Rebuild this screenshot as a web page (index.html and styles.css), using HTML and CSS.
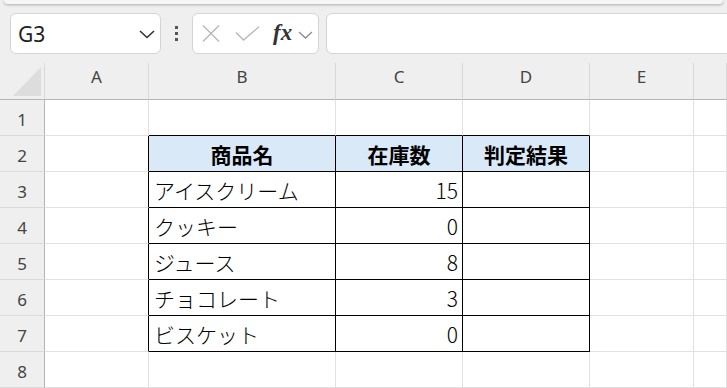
FILE: index.html
```html
<!DOCTYPE html>
<html lang="ja">
<head>
<meta charset="utf-8">
<link rel="stylesheet" href="styles.css">
</head>
<body>
<div class="app">
  <div class="ribbon-edge"></div>
  <div class="formula-bar">
    <div class="namebox">
      <span class="cellref">G3</span>
      <svg class="chev" width="16" height="9" viewBox="0 0 16 9"><path d="M1 1 L8 7.5 L15 1" fill="none" stroke="#333" stroke-width="1.6"/></svg>
    </div>
    <div class="dots"><i></i><i></i><i></i></div>
    <div class="fxbox">
      <svg class="ic-x" width="18" height="17" viewBox="0 0 18 17"><path d="M1 0.5 L17 16.5 M17 0.5 L1 16.5" stroke="#b8b8b8" stroke-width="1.4" fill="none"/></svg>
      <svg class="ic-check" width="25" height="15" viewBox="0 0 25 15"><path d="M1 6.5 L8.5 14 L24 0.8" stroke="#b8b8b8" stroke-width="1.4" fill="none"/></svg>
      <span class="fx">fx</span>
      <svg class="chev-s" width="15" height="8" viewBox="0 0 15 8"><path d="M1 1 L7.5 7 L14 1" fill="none" stroke="#8a8a8a" stroke-width="1.3"/></svg>
    </div>
    <div class="formula-input"></div>
  </div>
  <div class="sheet">
    <div class="corner"><svg width="44" height="36" viewBox="0 0 44 36"><polygon points="13,33 41,4 41,33" fill="#dddddd"/></svg></div>
    <div class="ch">A</div><div class="ch">B</div><div class="ch">C</div><div class="ch">D</div><div class="ch">E</div><div class="ch"></div>

    <div class="rh">1</div><div class="c"></div><div class="c bb"></div><div class="c bb"></div><div class="c bb"></div><div class="c"></div><div class="c"></div>

    <div class="rh">2</div><div class="c br"></div><div class="c t th">商品名</div><div class="c t th">在庫数</div><div class="c t th">判定結果</div><div class="c"></div><div class="c"></div>

    <div class="rh">3</div><div class="c br"></div><div class="c t">アイスクリーム</div><div class="c t num">15</div><div class="c t"></div><div class="c"></div><div class="c"></div>

    <div class="rh">4</div><div class="c br"></div><div class="c t">クッキー</div><div class="c t num">0</div><div class="c t"></div><div class="c"></div><div class="c"></div>

    <div class="rh">5</div><div class="c br"></div><div class="c t">ジュース</div><div class="c t num">8</div><div class="c t"></div><div class="c"></div><div class="c"></div>

    <div class="rh">6</div><div class="c br"></div><div class="c t">チョコレート</div><div class="c t num">3</div><div class="c t"></div><div class="c"></div><div class="c"></div>

    <div class="rh">7</div><div class="c br"></div><div class="c t">ビスケット</div><div class="c t num">0</div><div class="c t"></div><div class="c"></div><div class="c"></div>

    <div class="rh">8</div><div class="c"></div><div class="c"></div><div class="c"></div><div class="c"></div><div class="c"></div><div class="c"></div>
  </div>
</div>
</body>
</html>
```

FILE: styles.css
```css
* { box-sizing: border-box; }
html, body {
  margin: 0;
  padding: 0;
  width: 727px;
  height: 388px;
  overflow: hidden;
  background: #efefef;
}
.app {
  display: flex;
  flex-direction: column;
  height: 388px;
}
.ribbon-edge {
  height: 4px;
  margin: 0 4px;
  background: #f6f6f6;
  border-radius: 0 0 6px 6px;
  box-shadow: 0 1px 3px rgba(0, 0, 0, 0.28);
}
.formula-bar {
  display: flex;
  align-items: center;
  height: 59px;
  padding: 9px 0 9px 10px;
}
.namebox {
  width: 151px;
  height: 41px;
  background: #fff;
  border: 1px solid #d4d4d4;
  border-radius: 6px;
  display: flex;
  align-items: center;
  justify-content: space-between;
  padding: 0 5px 0 7px;
}
.cellref {
  font-family: "Noto Sans", sans-serif;
  font-size: 21px;
  color: #222;
  line-height: 1;
  padding-top: 1px;
}
.chev { margin-top: 1px; }
.dots {
  width: 31px;
  display: flex;
  flex-direction: column;
  align-items: center;
  gap: 3px;
}
.dots i {
  display: block;
  width: 3px;
  height: 3px;
  background: #555;
}
.fxbox {
  width: 127px;
  height: 41px;
  background: #fff;
  border: 1px solid #d4d4d4;
  border-radius: 6px;
  display: flex;
  align-items: center;
  padding-left: 8px;
}
.ic-x { margin-left: 1px; }
.ic-check { margin-left: 15px; }
.fx {
  margin-left: 13px;
  font-family: "Liberation Serif", serif;
  font-style: italic;
  font-weight: bold;
  font-size: 23px;
  color: #333;
  line-height: 1;
  margin-bottom: 3px;
}
.chev-s { margin-left: 6px; margin-top: 2px; }
.formula-input {
  flex: 1;
  height: 41px;
  margin-left: 7px;
  margin-right: -10px;
  background: #fff;
  border: 1px solid #d4d4d4;
  border-radius: 6px 0 0 6px;
}
.sheet {
  display: grid;
  grid-template-columns: 45px 104px 187px 127px 127px 104px 1fr;
  grid-template-rows: 37px repeat(8, 36px);
  background: #fff;
}
.corner {
  background: #efefef;
  border-right: 1px solid #d8d8d8;
  border-bottom: 1px solid #b5b5b5;
}
.corner svg { display: block; }
.ch {
  background: #efefef;
  border-right: 1px solid #d8d8d8;
  border-bottom: 1px solid #b5b5b5;
  font-family: "Noto Sans", sans-serif;
  font-size: 17px;
  color: #444;
  display: flex;
  align-items: center;
  justify-content: center;
  padding-bottom: 9px;
}
.rh {
  background: #efefef;
  border-right: 1px solid #b5b5b5;
  border-bottom: 1px solid #dadada;
  font-family: "Noto Sans", sans-serif;
  font-size: 17px;
  color: #444;
  display: flex;
  align-items: center;
  justify-content: center;
  padding-top: 3px;
}
.c {
  border-right: 1px solid #e1e1e1;
  border-bottom: 1px solid #e1e1e1;
  font-family: "Noto Sans CJK JP", sans-serif;
  font-weight: 300;
  font-size: 21px;
  color: #000;
  display: flex;
  align-items: center;
  padding: 0 4px 0 5px;
  white-space: nowrap;
}
.c.bb { border-bottom-color: #000; }
.c.br { border-right-color: #000; }
.c.t {
  border-right-color: #000;
  border-bottom-color: #000;
}
.c.th {
  background: #dae9f8;
  font-weight: bold;
  justify-content: center;
  padding: 0;
}
.c.num { justify-content: flex-end; }
```
